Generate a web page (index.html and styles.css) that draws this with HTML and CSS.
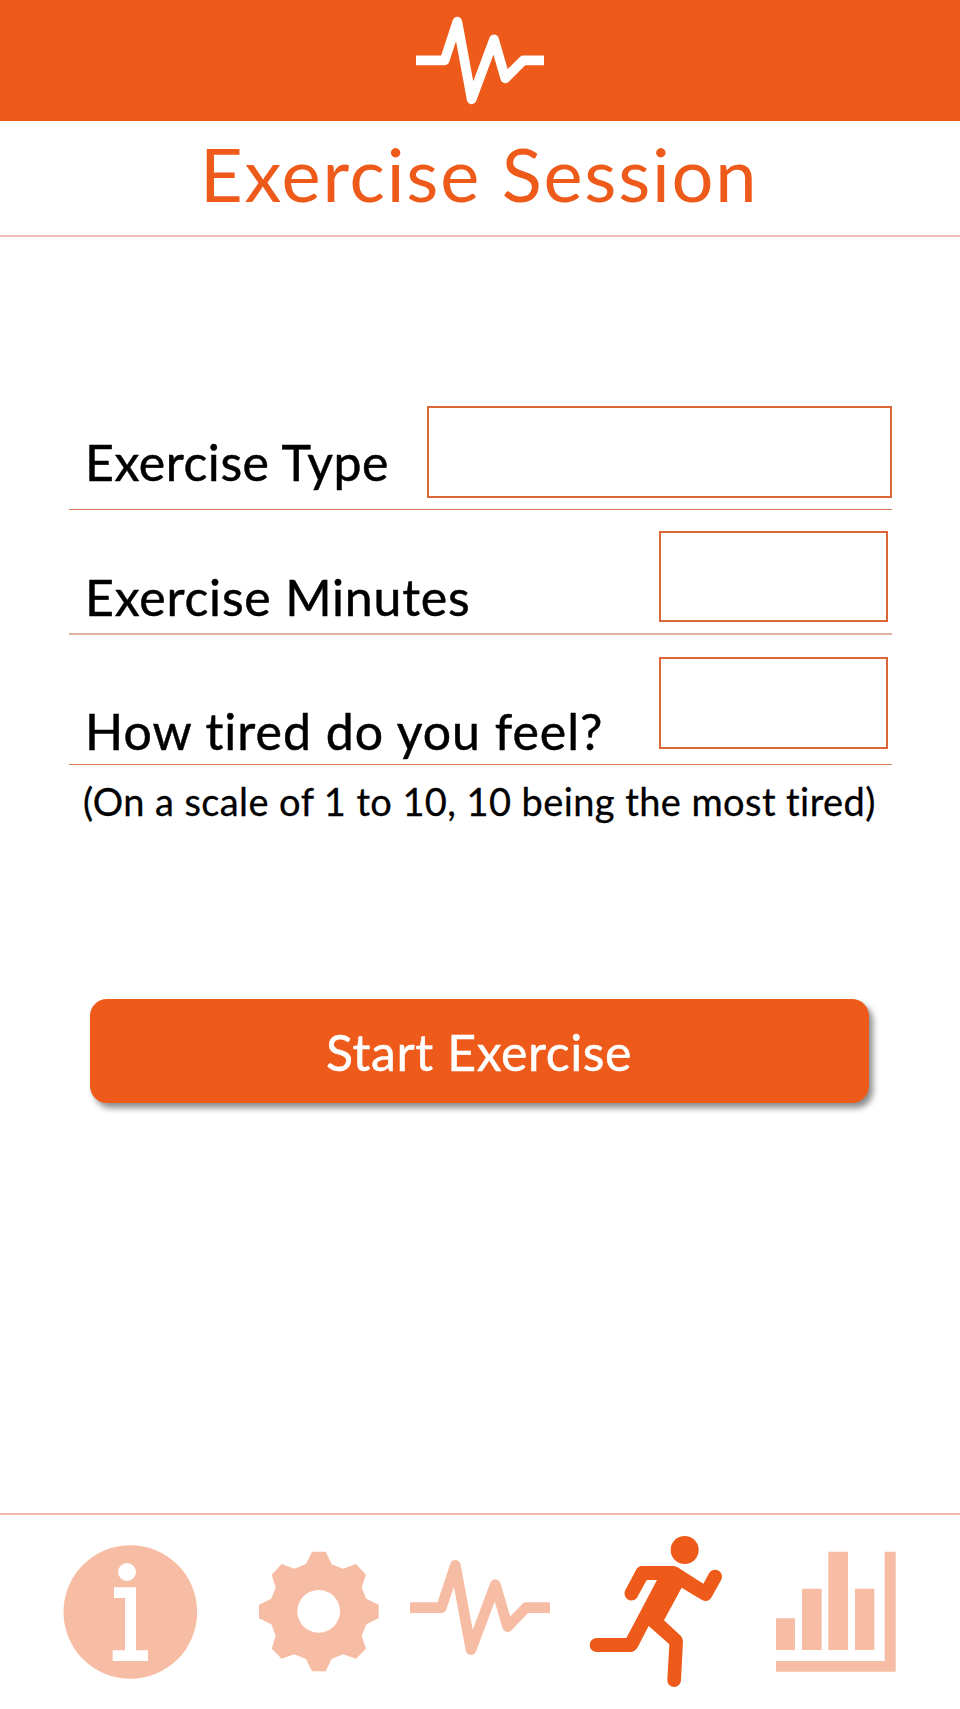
FILE: index.html
```html
<!DOCTYPE html>
<html lang="en">
<head>
<meta charset="utf-8">
<title>Exercise Session</title>
<link rel="stylesheet" href="styles.css">
</head>
<body>
<div class="app">
  <header class="topbar">
    <svg class="topbar-logo" viewBox="108 0 384 363"><path d="M108 181H194L232 65L275 298L342 118L376 235L430 181H492" fill="none" stroke="#fff" stroke-width="29" stroke-linejoin="round"/></svg>
  </header>
  <div class="title-bar"><h1 class="title">Exercise Session</h1></div>
  <main class="content">
    <form class="form">
      <div class="row row-type">
        <label class="label" for="type">Exercise Type</label>
        <input class="field field-wide" id="type" type="text">
      </div>
      <div class="row row-minutes">
        <label class="label" for="minutes">Exercise Minutes</label>
        <input class="field" id="minutes" type="text">
      </div>
      <div class="row row-tired">
        <label class="label" for="tired">How tired do you feel?</label>
        <input class="field" id="tired" type="text">
      </div>
      <p class="hint">(On a scale of 1 to 10, 10 being the most tired)</p>
      <button class="start" type="button">Start Exercise</button>
    </form>
  </main>
  <nav class="tabs">
    <svg class="tab tab-info" viewBox="60 45 420 582"><circle cx="271" cy="336" r="200.500" fill="#f7bda4"/><circle cx="261" cy="216" r="27" fill="#fff"/><path d="M222 262H288V451H324V483H218V451H255V294H222Z" fill="#fff"/></svg>
    <svg class="tab tab-gear" viewBox="45 45 384 582"><path fill="#f7bda4" fill-rule="evenodd" d="M216 155H257L275 193L309 206L348 192L378 224L365 262L379 296L416 314V355L379 373L365 407L378 446L348 476L309 463L275 477L257 514H216L198 477L163 463L125 476L95 446L107 407L94 373L57 355V314L94 296L107 262L95 224L125 192L163 206L198 192ZM236 270A64 64 0 1 0 236.100 270Z"/></svg>
    <svg class="tab tab-pulse" viewBox="30 45 420 582"><path d="M30 323H124L166 196L213 449L286 254L323 380L378 323H450" fill="none" stroke="#f7bda4" stroke-width="32" stroke-linejoin="round"/></svg>
    <svg class="tab tab-run" viewBox="54 45 408 582"><g fill="#ee5a19"><circle cx="344" cy="150" r="42"/><path d="M215 198H310Q318 198 325 203L400 251L418 218A21 21 0 0 1 455 237L425 291Q415 309 396 300L335 263L282 361L332 407Q339 414 339 424L333 541A20.500 20.500 0 0 1 292 540L298 433L236 378L203 442Q195 456 181 456H80A20.500 20.500 0 0 1 80 414H169L261 240H230L201 293A21 21 0 0 1 165 272L198 210Q204 199 215 198Z"/></g></svg>
    <svg class="tab tab-chart" viewBox="78 45 360 582"><path fill="#f7bda4" d="M78 355H135V450H78ZM156 266H215V450H156ZM235 155H294V450H235ZM315 266H373V450H315ZM404 155H437V515H78V483H404Z"/></svg>
  </nav>
</div>
</body>
</html>
```
FILE: styles.css
```css
* { box-sizing: border-box; }
body { margin: 0; background: #fff; font-family: Lato, "Liberation Sans", sans-serif; font-variant-ligatures: none; color: #000; }
.app { width: 960px; height: 1709px; display: flex; flex-direction: column; }
.topbar { height: 121px; flex: none; background: #ee5a19; display: flex; justify-content: center; }
.topbar-logo { width: 128px; height: 121px; }
.title-bar { height: 116px; flex: none; border-bottom: 2px solid #ebbfb6; padding-left: 200px; }
.title { margin: 0; font-size: 74px; font-weight: 400; line-height: 105px; letter-spacing: 1.8px; white-space: nowrap; color: #ee5a19; }
.content { flex: 1; padding: 169px 68px 0 69px; }
.row { display: flex; justify-content: space-between; border-bottom: 1px solid #d67b55; padding-left: 16px; }
.row-type { height: 104px; }
.row-minutes { height: 125px; padding-top: 21px; padding-right: 4px; border-bottom: 2px solid #e2b09e; }
.row-tired { height: 130px; padding-top: 22px; padding-right: 4px; }
.label { align-self: flex-end; font-size: 50px; line-height: 60px; width: 330px; white-space: nowrap; -webkit-text-stroke: 0.5px #000; }
.row-type .label { margin-bottom: 17px; letter-spacing: 0.55px; }
.row-minutes .label { margin-bottom: 6px; letter-spacing: 0.8px; }
.row-tired .label { margin-bottom: 3px; letter-spacing: 1px; }
.field { width: 229px; height: 92px; padding: 0 16px; border: 2px solid #dc6638; border-radius: 0; background: transparent; font: inherit; font-size: 44px; outline: none; }
.row-minutes .field { height: 91px; }
.field-wide { width: 465px; }
.hint { margin: 11px 0 0 14px; font-size: 38px; line-height: 50px; letter-spacing: 0.41px; white-space: nowrap; -webkit-text-stroke: 0.3px #000; }
.start { display: flex; justify-content: flex-start; align-items: center; width: 779px; height: 104px; margin: 173px 0 0 21px; padding: 2px 0 0 236px; border: 0; border-radius: 17px; background: #ee5a19; color: #fff; font-family: inherit; font-size: 50px; letter-spacing: 0.58px; -webkit-text-stroke: 0.5px #fff; box-shadow: 4px 5px 6px rgba(0, 0, 0, 0.45); }
.tabs { height: 196px; flex: none; border-top: 2px solid #efb5ae; display: flex; padding-left: 60px; }
.tab { height: 194px; flex: none; }
.tab-info { width: 140px; margin-right: 55px; }
.tab-gear { width: 128px; margin-right: 27px; }
.tab-pulse { width: 140px; margin-right: 38px; }
.tab-run { width: 136px; margin-right: 52px; }
.tab-chart { width: 120px; }
```
